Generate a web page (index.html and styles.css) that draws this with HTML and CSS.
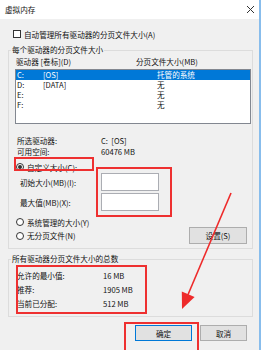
FILE: index.html
```html
<!DOCTYPE html>
<html lang="zh-CN">
<head>
    <meta charset="UTF-8">
    <title>虚拟内存</title>
    <link rel="stylesheet" href="styles.css">
</head>
<body>
    <div class="window">
        <div class="titlebar">
            <span class="title">虚拟内存</span>
            <svg class="close" width="7" height="7" viewBox="0 0 7 7">
                <path d="M0 0 L7 7 M7 0 L0 7" stroke="#333" stroke-width="1" fill="none"/>
            </svg>
        </div>

        <div class="client">
            <div class="check-row">
                <span class="checkbox"></span>
                <span>自动管理所有驱动器的分页文件大小(A)</span>
            </div>

            <fieldset class="group group-drives">
                <legend>每个驱动器的分页文件大小</legend>
                <div class="list-head">
                    <span>驱动器 [卷标](D)</span>
                    <span>分页文件大小(MB)</span>
                </div>
                <div class="listbox">
                    <div class="list-row selected"><span>C:</span><span>[OS]</span><span>托管的系统</span></div>
                    <div class="list-row"><span>D:</span><span>[DATA]</span><span>无</span></div>
                    <div class="list-row"><span>E:</span><span></span><span>无</span></div>
                    <div class="list-row"><span>F:</span><span></span><span>无</span></div>
                </div>

                <div class="drive-info">
                    <span>所选驱动器:</span><span>C:&nbsp; [OS]</span>
                    <span>可用空间:</span><span>60476 MB</span>
                </div>

                <div class="radio-row radio-custom">
                    <span class="radio on"></span>
                    <span>自定义大小(C):</span>
                </div>
                <div class="size-rows">
                    <span>初始大小(MB)(I):</span><span class="textbox"></span>
                    <span>最大值(MB)(X):</span><span class="textbox"></span>
                </div>
                <div class="radio-row radio-system">
                    <span class="radio"></span>
                    <span>系统管理的大小(Y)</span>
                </div>
                <div class="radio-row radio-none">
                    <span class="radio"></span>
                    <span>无分页文件(N)</span>
                    <button class="btn btn-set">设置(S)</button>
                </div>
            </fieldset>

            <fieldset class="group group-total">
                <legend>所有驱动器分页文件大小的总数</legend>
                <div class="totals">
                    <span>允许的最小值:</span><span>16 MB</span>
                    <span>推荐:</span><span>1905 MB</span>
                    <span>当前已分配:</span><span>512 MB</span>
                </div>
            </fieldset>

            <div class="buttons">
                <button class="btn btn-ok">确定</button>
                <button class="btn btn-cancel">取消</button>
            </div>
        </div>

        <!-- red annotations -->
        <div class="mark mark-custom"></div>
        <div class="mark mark-inputs"></div>
        <div class="mark mark-totals"></div>
        <div class="mark mark-ok"></div>
        <svg class="arrow" width="261" height="350" viewBox="0 0 261 350">
            <line x1="231" y1="193" x2="187" y2="297" stroke="#ee2a2a" stroke-width="1.6"/>
            <polygon points="182,309 181.8,291.6 194.6,297" fill="#ee2a2a"/>
        </svg>
    </div>
</body>
</html>
```

FILE: styles.css
```css
* {
    margin: 0;
    padding: 0;
    box-sizing: border-box;
}

body {
    font-family: "Noto Sans CJK SC", sans-serif;
    font-size: 7.6px;
    color: #111;
    background: #fff;
}

.window {
    position: relative;
    width: 261px;
    height: 350px;
    border-right: 2px solid #88bdec;
    background: #f0f0f0;
    overflow: hidden;
}

.titlebar {
    height: 19px;
    background: #fff;
    display: flex;
    align-items: center;
    justify-content: space-between;
    padding: 0 5px 0 5px;
}

.title {
    line-height: 10px;
}

.client {
    padding-top: 10px;
}

.check-row {
    display: flex;
    align-items: center;
    height: 10px;
    padding-left: 13px;
}

.checkbox {
    width: 8px;
    height: 8px;
    border: 1px solid #333;
    background: #fff;
    margin-right: 3px;
}

.group {
    border: 1px solid #dcdcdc;
    margin: 6px 6px 0 8px;
    padding: 0 0 4px;
}

.group legend {
    margin-left: 2px;
    padding: 0 1px;
    line-height: 10px;
}

.list-head {
    display: grid;
    grid-template-columns: 120px 1fr;
    margin-top: 2px;
    padding-left: 7px;
    line-height: 10px;
}

.listbox {
    margin: 2px 0 0 6px;
    width: 236px;
    height: 55px;
    border: 1px solid #828790;
    background: #fff;
}

.list-row {
    display: grid;
    grid-template-columns: 26px 114px 1fr;
    height: 10px;
    line-height: 10px;
    padding-left: 1px;
}

.list-row.selected {
    background: #0078d7;
    color: #fff;
}

.drive-info {
    display: grid;
    grid-template-columns: 84px 1fr;
    margin-top: 11px;
    padding-left: 8px;
    line-height: 11px;
}

.radio-row {
    display: flex;
    align-items: center;
    height: 10px;
    padding-left: 7px;
}

.radio {
    width: 8px;
    height: 8px;
    border: 1px solid #333;
    border-radius: 50%;
    background: #fff;
    margin-right: 3px;
    display: flex;
    align-items: center;
    justify-content: center;
}

.radio.on::after {
    content: "";
    width: 4px;
    height: 4px;
    border-radius: 50%;
    background: #333;
}

.radio-custom {
    margin-top: 5px;
}

.size-rows {
    display: grid;
    grid-template-columns: 81px 58px;
    row-gap: 2px;
    align-items: center;
    margin-top: 1px;
    padding-left: 11px;
}

.textbox {
    height: 18px;
    border: 1px solid #abadb3;
    background: #fff;
}

.radio-system {
    margin-top: 6px;
}

.radio-none {
    height: 17px;
}

.btn {
    height: 17px;
    border: 1px solid #adadad;
    background: #e1e1e1;
    font: inherit;
    color: #111;
}

.btn-set {
    width: 58px;
    margin-left: auto;
    margin-right: 5px;
}

.group-total {
    margin-top: 5px;
    padding-bottom: 5px;
}

.totals {
    display: grid;
    grid-template-columns: 86px 1fr;
    margin-top: 5px;
    padding-left: 8px;
    line-height: 14px;
}

.buttons {
    display: flex;
    gap: 8px;
    margin-top: 8px;
    padding-left: 135px;
}

.buttons .btn {
    height: 16px;
}

.btn-ok {
    width: 57px;
    border-color: #0078d7;
}

.btn-cancel {
    width: 47px;
}

.mark {
    position: absolute;
    border: 2px solid #ee3030;
}

.mark-custom {
    left: 14px;
    top: 157px;
    width: 80px;
    height: 14px;
}

.mark-inputs {
    left: 96px;
    top: 167px;
    width: 76px;
    height: 50px;
}

.mark-totals {
    left: 16px;
    top: 265px;
    width: 131px;
    height: 49px;
}

.mark-ok {
    left: 124px;
    top: 322px;
    width: 75px;
    height: 40px;
}

.arrow {
    position: absolute;
    left: 0;
    top: 0;
    pointer-events: none;
}
```
